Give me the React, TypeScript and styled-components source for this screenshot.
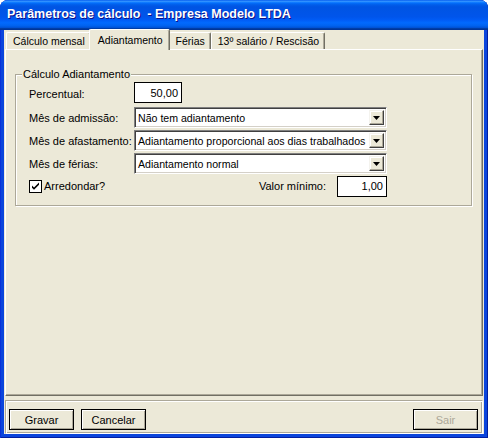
import styled, { createGlobalStyle } from "styled-components";

const GlobalStyle = createGlobalStyle`
  html, body {
    margin: 0;
    padding: 0;
    background: #ffffff;
  }
  body {
    font-family: "Liberation Sans", Arial, sans-serif;
    font-size: 11px;
    color: #000;
  }
`;

const Window = styled.div`
  width: 488px;
  height: 438px;
  display: flex;
  flex-direction: column;
  background: #0a45dc;
  border-radius: 8px 8px 0 0;
  overflow: hidden;
  box-shadow: inset 1px 0 0 #0831d9, inset -1px 0 0 #001ea0, inset 0 -1px 0 #001ea0;
`;

const TitleBar = styled.div`
  height: 30px;
  flex-shrink: 0;
  display: flex;
  align-items: center;
  padding: 0 0 3px 7px;
  box-sizing: border-box;
  background: linear-gradient(
    to bottom,
    #0058ee 0%,
    #3593ff 4%,
    #288eff 6%,
    #127dff 8%,
    #036ffc 10%,
    #0262ee 14%,
    #0057e5 20%,
    #0054e3 24%,
    #0055eb 56%,
    #005bf5 66%,
    #026afe 76%,
    #0062ef 86%,
    #0052d6 92%,
    #0040ab 94%,
    #003092 100%
  );
  color: #fff;
  font-weight: bold;
  font-size: 12.5px;
  text-shadow: 1px 1px 0 #0f1089;
  white-space: pre;
`;

const Body = styled.div`
  flex: 1;
  margin: 0 4px 4px 4px;
  background: #ece9d8;
  display: flex;
  flex-direction: column;
  padding: 0 1px 0 1px;
`;

const TabStrip = styled.div`
  display: flex;
  align-items: flex-end;
  height: 19px;
  padding-left: 1px;
  position: relative;
  z-index: 1;
  font-size: 10.5px;
`;

const Tab = styled.div<{ $active?: boolean }>`
  height: ${(p) => (p.$active ? "21px" : "17px")};
  margin: ${(p) => (p.$active ? "0 -1px -1px -2px" : "0")};
  padding: ${(p) => (p.$active ? "0 6px 0 8px" : "0 5px 0 6px")};
  display: flex;
  align-items: center;
  box-sizing: border-box;
  background: #ece9d8;
  border-top: 1px solid #fff;
  border-left: 1px solid #fff;
  border-right: 1px solid #716f64;
  box-shadow: inset -1px 0 0 #aca899;
  border-radius: 2px 2px 0 0;
  position: relative;
  z-index: ${(p) => (p.$active ? 2 : 1)};
  white-space: nowrap;
`;

const Panel = styled.div`
  flex: 1;
  border-top: 1px solid #fff;
  border-left: 1px solid #fff;
  border-right: 1px solid #716f64;
  border-bottom: 1px solid #716f64;
  box-shadow: inset -1px -1px 0 #aca899;
  padding: 18px 10px 0 9px;
`;

const Group = styled.fieldset`
  margin: 0;
  height: 138px;
  box-sizing: border-box;
  padding: 2px 0 0 13px;
  border: 1px solid #aca899;
  box-shadow: inset 1px 1px 0 #fff, 1px 1px 0 #fff;
  display: grid;
  grid-template-columns: 105px 253px;
  grid-template-rows: 23px 21px 21px 21px 21px;
  row-gap: 2px;
  align-items: center;
  align-content: start;
`;

const Legend = styled.legend`
  padding: 0 1px 0 1px;
  margin-left: -7px;
  background: #ece9d8;
`;

const Label = styled.span`
  white-space: nowrap;
`;

const NumberBox = styled.div<{ $width: number; $top?: boolean }>`
  width: ${(p) => p.$width}px;
  height: 21px;
  align-self: ${(p) => (p.$top ? "start" : "auto")};
  box-sizing: border-box;
  border: 1px solid #000;
  background: #fff;
  display: flex;
  align-items: center;
  justify-content: flex-end;
  padding-right: 3px;
`;

const Combo = styled.div`
  height: 21px;
  box-sizing: border-box;
  border-top: 1px solid #808080;
  border-left: 1px solid #808080;
  border-right: 1px solid #fff;
  border-bottom: 1px solid #fff;
  box-shadow: inset 1px 1px 0 #404040, inset -1px -1px 0 #d4d0c8;
  background: #fff;
  display: flex;
  align-items: stretch;
  padding: 2px;
`;

const ComboText = styled.span`
  flex: 1;
  overflow: hidden;
  white-space: nowrap;
  display: flex;
  align-items: center;
  padding-left: 1px;
  font-size: 10.6px;
`;

const ComboButton = styled.div`
  width: 15px;
  flex-shrink: 0;
  box-sizing: border-box;
  background: #ece9d8;
  border-top: 1px solid #f4f3ee;
  border-left: 1px solid #f4f3ee;
  border-right: 1px solid #404040;
  border-bottom: 1px solid #404040;
  box-shadow: inset -1px -1px 0 #aca899, inset 1px 1px 0 #fff;
  display: flex;
  align-items: center;
  justify-content: center;
`;

const BottomRow = styled.div`
  grid-column: 1 / span 2;
  display: flex;
  align-items: center;
  margin-top: -1px;
`;

const Check = styled.label`
  display: flex;
  align-items: center;
  gap: 2px;
  flex: 1;
`;

const CheckBoxBox = styled.span`
  width: 13px;
  height: 13px;
  box-sizing: border-box;
  border: 1px solid #000;
  background: #fff;
  display: flex;
  align-items: center;
  justify-content: center;
`;

const MinLabel = styled.span`
  margin-right: 11px;
`;

const ButtonBar = styled.div`
  height: 34px;
  margin-top: 4px;
  box-sizing: border-box;
  border-top: 1px solid #aca899;
  border-left: 1px solid #aca899;
  border-right: 1px solid #fff;
  border-bottom: 1px solid #fff;
  box-shadow: inset 1px 1px 0 #fff, inset -1px -1px 0 #aca899;
  display: flex;
  align-items: flex-end;
  padding: 0 4px 3px 3px;
  gap: 7px;
`;

const Button = styled.div<{ $disabled?: boolean }>`
  width: 65px;
  height: 21px;
  box-sizing: border-box;
  border: 1px solid #000;
  box-shadow: inset 1px 1px 0 #fff, inset -1px -1px 0 #aca899;
  display: flex;
  align-items: center;
  justify-content: center;
  color: ${(p) => (p.$disabled ? "#aca899" : "#000")};
  margin-left: ${(p) => (p.$disabled ? "auto" : "0")};
`;

function Arrow() {
  return (
    <svg width="7" height="4" viewBox="0 0 7 4">
      <path d="M0 0h7L3.5 4z" fill="#000" />
    </svg>
  );
}

function ComboField({ value }: { value: string }) {
  return (
    <Combo>
      <ComboText>{value}</ComboText>
      <ComboButton>
        <Arrow />
      </ComboButton>
    </Combo>
  );
}

export default function App() {
  return (
    <>
      <GlobalStyle />
      <Window>
        <TitleBar>Parâmetros de cálculo  - Empresa Modelo LTDA</TitleBar>
        <Body>
          <TabStrip>
            <Tab>Cálculo mensal</Tab>
            <Tab $active>Adiantamento</Tab>
            <Tab>Férias</Tab>
            <Tab>13º salário / Rescisão</Tab>
          </TabStrip>
          <Panel>
            <Group>
              <Legend>Cálculo Adiantamento</Legend>
              <Label>Percentual:</Label>
              <NumberBox $width={48} $top>
                50,00
              </NumberBox>
              <Label>Mês de admissão:</Label>
              <ComboField value="Não tem adiantamento" />
              <Label>Mês de afastamento:</Label>
              <ComboField value="Adiantamento proporcional aos dias trabalhados" />
              <Label>Mês de férias:</Label>
              <ComboField value="Adiantamento normal" />
              <BottomRow>
                <Check>
                  <CheckBoxBox>
                    <svg width="9" height="9" viewBox="0 0 9 9">
                      <path d="M1 3.5l2 2 5-5v2.2L3 7.7 1 5.7z" fill="#000" />
                    </svg>
                  </CheckBoxBox>
                  Arredondar?
                </Check>
                <MinLabel>Valor mínimo:</MinLabel>
                <NumberBox $width={50}>1,00</NumberBox>
              </BottomRow>
            </Group>
          </Panel>
          <ButtonBar>
            <Button>Gravar</Button>
            <Button>Cancelar</Button>
            <Button $disabled>Sair</Button>
          </ButtonBar>
        </Body>
      </Window>
    </>
  );
}
